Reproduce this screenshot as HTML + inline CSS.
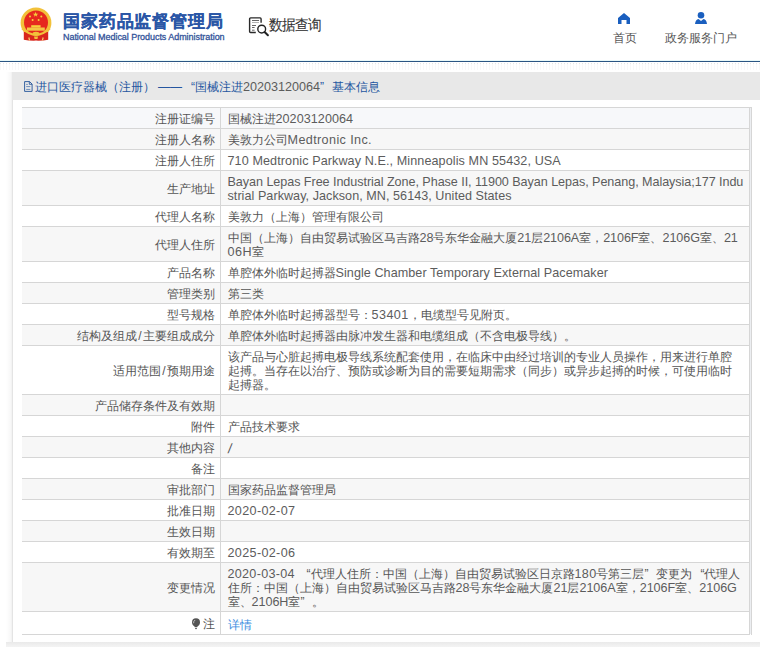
<!DOCTYPE html>
<html><head><meta charset="utf-8">
<style>
*{margin:0;padding:0;box-sizing:border-box}
html,body{width:760px;height:647px;overflow:hidden;background:#fff;font-family:"Liberation Sans",sans-serif;position:relative}
.a{position:absolute;white-space:nowrap}
.title{left:63px;top:9.5px;font-size:16.5px;font-weight:bold;color:#2a56a6;line-height:22px;-webkit-text-stroke:0.2px #2a56a6;letter-spacing:0.85px}
.sub{left:63px;top:32.4px;font-size:9px;color:#34549a;line-height:11px;letter-spacing:-0.05px;-webkit-text-stroke:0.3px #34549a}
.sq{left:269px;top:15px;font-size:14px;color:#333;line-height:18px;letter-spacing:-0.9px;transform:scaleY(1.1);transform-origin:0 0;-webkit-text-stroke:0.1px #333}
.nav{font-size:12px;color:#555;line-height:14px;top:31px}
.topline{left:0;top:61px;width:760px;height:1px;background:#2a5482}
.topline2{left:0;top:60px;width:760px;height:1px;background:#e8f8f9}
.dots{left:0;top:63px;width:760px;height:1px;background-image:linear-gradient(90deg,#d0d0d0 1px,transparent 1px);background-size:3px 1px;opacity:.55}
.dots2{left:0;top:64px;width:760px;height:6px;background-image:linear-gradient(90deg,#f4f4f4 1px,transparent 1px);background-size:3px 6px;opacity:.6}
.shadowL{left:6px;top:72px;width:7px;height:575px;background:linear-gradient(90deg,rgba(0,0,0,0),rgba(0,0,0,.03) 70%,rgba(0,0,0,.09))}
.shadowB{left:6px;top:642px;width:760px;height:5px;background:linear-gradient(180deg,#e9e9e9,#f0f0f0 60%,#f3f3f3)}
.panel{left:12px;top:72px;width:760px;height:570px;background:#fff;border-left:1px solid #e4e4e4}
.phead{left:12px;top:72px;width:760px;height:28px;background:#e8e8e8}
.ptxt{left:35px;top:80px;font-size:12px;color:#2456a0;line-height:14px}
.tbl{left:22px;top:107px;width:728px;border-top:1px solid #d6d6d6}
.gapc{left:750px;top:108px;width:1px;height:526px;background:#eceef1}
.outr{left:751px;top:107px;width:1px;height:528px;background:#d6d6d6}
.outt{left:749px;top:107px;width:3px;height:1px;background:#d6d6d6}
.r{display:flex;border-bottom:1px solid #d6d6d6;font-size:12px;line-height:14px;color:#555}
.r.g{background:#f7f7f7}
.r.h{background:#f7f8fa}
.l{width:199px;border-right:1px solid #d6d6d6;text-align:right;padding-right:5px;padding-top:2px;display:flex;align-items:center;justify-content:flex-end}
.v{width:529px;border-right:1px solid #d6d6d6;padding:4px 0 2px 6.5px;white-space:nowrap}
.e{width:2px;border-right:1px solid #d6d6d6;background:#f2f2f2}
.la{font-size:12.6px;color:#5c5c5c}
.q{display:inline-block;width:12px}
.qo{text-align:right}
.qc{text-align:left}
</style></head><body>
<!-- emblem -->
<svg class="a" style="left:17px;top:4px" width="38" height="40" viewBox="0 0 38 40">
  <path d="M6.8 24 L6.8 35.8 Q12 36.8 19 36.6 Q26 36.8 31.2 35.8 L31.2 24 Z" fill="#d9261d"/>
  <path d="M3.6 19 A15.4 15.4 0 0 1 34.4 19 Q34.4 24 31 28 L7 28 Q3.6 24 3.6 19 Z" fill="#f2c13a"/>
  <circle cx="19" cy="18.4" r="12" fill="#e6281e"/>
  <polygon points="18.6,7.8 19.3,9.7 21.3,9.7 19.7,10.9 20.3,12.8 18.6,11.6 16.9,12.8 17.5,10.9 15.9,9.7 17.9,9.7" fill="#f6cf3c"/>
  <circle cx="13" cy="12.6" r="1" fill="#f6cf3c"/><circle cx="24.3" cy="12.6" r="1" fill="#f6cf3c"/>
  <circle cx="15.6" cy="16" r="1" fill="#f6cf3c"/><circle cx="21.6" cy="16" r="1" fill="#f6cf3c"/>
  <rect x="14.2" y="21.2" width="9.4" height="2.4" fill="#f6cf3c"/>
  <rect x="10" y="23.5" width="17.8" height="3.2" fill="#f3c544"/>
  <path d="M5.2 24.5 Q19 37 32.8 24.5" fill="none" stroke="#f2c13a" stroke-width="2.3"/>
  <path d="M15.8 28.6 Q19 27 22.2 28.6 L21.6 31.4 H16.4 Z" fill="#f2c13a"/>
  <path d="M17 32.5 H21 L20.5 35 H17.5 Z" fill="#f2c13a"/>
  <path d="M11.8 33.5 L12.6 36.4 M26.2 33.5 L25.4 36.4" stroke="#f6d36a" stroke-width="1.2"/>
</svg>
<div class="a title">国家药品监督管理局</div>
<div class="a sub">National Medical Products Administration</div>
<!-- data query icon -->
<svg class="a" style="left:245px;top:12px" width="28" height="28" viewBox="0 0 28 28">
  <path d="M16.1 10.8 V6.9 Q16.1 5.9 15.1 5.9 H5.6 Q4.6 5.9 4.6 6.9 V19.5 Q4.6 20.5 5.6 20.5 H10.8" fill="none" stroke="#2a2a2a" stroke-width="1.4"/>
  <path d="M7 8.5 H14 M7 13.5 H11 M7 15.5 H9.6 M7 18.2 H9.6" stroke="#555" stroke-width="0.9"/>
  <path d="M7 10.5 H14" stroke="#aaa" stroke-width="0.9"/>
  <circle cx="16.7" cy="17.1" r="3.9" fill="#fff" stroke="#222" stroke-width="1.4"/>
  <path d="M19.6 20 L22.9 23.3" stroke="#222" stroke-width="2" stroke-linecap="round"/>
</svg>
<div class="a sq">数据查询</div>
<!-- nav -->
<svg class="a" style="left:617px;top:12px" width="14" height="13" viewBox="0 0 14 13">
  <path d="M7 1 L13 6 V12 H9.5 V8 H4.5 V12 H1 V6 Z" fill="#1a5fbf"/>
</svg>
<div class="a nav" style="left:613px">首页</div>
<svg class="a" style="left:694px;top:11px" width="14" height="14" viewBox="0 0 14 14">
  <circle cx="7" cy="4.2" r="3.3" fill="#1a5fbf"/>
  <path d="M1 13 Q1.5 8.5 4.5 8 L7 10 L9.5 8 Q12.5 8.5 13 13 Z" fill="#1a5fbf"/>
</svg>
<div class="a nav" style="left:665px">政务服务门户</div>

<div class="a topline2"></div>
<div class="a topline"></div>
<div class="a dots"></div><div class="a dots2"></div>

<div class="a shadowL"></div><div class="a shadowB"></div><div class="a panel"></div>
<div class="a phead"></div>
<svg class="a" style="left:21px;top:78px" width="16" height="16" viewBox="0 0 16 16">
  <path d="M3.6 3.6 H8.6 L11.1 6.1 V13.4 H3.6 Z" fill="none" stroke="#2b5a9c" stroke-width="0.95"/>
  <path d="M8.3 3.6 V6.3 H11.1" fill="none" stroke="#2b5a9c" stroke-width="0.9"/>
  <path d="M5.2 6.4 H6.8 M5.2 8.6 H9.3 M5.2 11.4 H9.3" stroke="#4a73ad" stroke-width="0.8"/>
</svg>
<div class="a ptxt">进口医疗器械（注册）<span style="display:inline-block;width:28px;padding-left:3px">——</span><span class="q qo">“</span>国械注进<span class="la">20203120064</span><span class="q qc">”</span>基本信息</div>

<div class="a gapc"></div><div class="a outr"></div><div class="a outt"></div>
<div class="a tbl">
<div class="r h" style="height:21px"><div class="l">注册证编号</div><div class="v">国械注进<span class="la" style="letter-spacing:0.054px">20203120064</span></div></div>
<div class="r g" style="height:21px"><div class="l">注册人名称</div><div class="v">美敦力公司<span class="la" style="letter-spacing:0.386px">Medtronic Inc.</span></div></div>
<div class="r " style="height:21px"><div class="l">注册人住所</div><div class="v"><span class="la" style="letter-spacing:0.095px">710 Medtronic Parkway N.E., Minneapolis MN 55432, USA</span></div></div>
<div class="r g" style="height:35px"><div class="l">生产地址</div><div class="v"><span class="la" style="letter-spacing:-0.055px">Bayan Lepas Free Industrial Zone, Phase II, 11900 Bayan Lepas, Penang, Malaysia;177 Indu</span><br><span class="la" style="letter-spacing:0.045px">strial Parkway, Jackson, MN, 56143, United States</span></div></div>
<div class="r " style="height:21px"><div class="l">代理人名称</div><div class="v">美敦力（上海）管理有限公司</div></div>
<div class="r g" style="height:35px"><div class="l">代理人住所</div><div class="v">中国（上海）自由贸易试验区马吉路<span class="la" style="letter-spacing:-0.085px">28</span>号东华金融大厦<span class="la" style="letter-spacing:-0.085px">21</span>层<span class="la" style="letter-spacing:-0.085px">2106A</span>室，<span class="la" style="letter-spacing:-0.085px">2106F</span>室、<span class="la" style="letter-spacing:-0.085px">2106G</span>室、<span class="la" style="letter-spacing:-0.085px">21</span><br><span class="la" style="letter-spacing:0.535px">06H</span>室</div></div>
<div class="r " style="height:21px"><div class="l">产品名称</div><div class="v">单腔体外临时起搏器<span class="la" style="letter-spacing:0.059px">Single Chamber Temporary External Pacemaker</span></div></div>
<div class="r g" style="height:21px"><div class="l">管理类别</div><div class="v">第三类</div></div>
<div class="r " style="height:21px"><div class="l">型号规格</div><div class="v">单腔体外临时起搏器型号：<span class="la" style="letter-spacing:0.44px">53401</span>，电缆型号见附页。</div></div>
<div class="r g" style="height:21px"><div class="l">结构及组成<span style="display:inline-block;width:6.3px;text-align:center">/</span>主要组成成分</div><div class="v">单腔体外临时起搏器由脉冲发生器和电缆组成（不含电极导线）。</div></div>
<div class="r " style="height:49px"><div class="l">适用范围<span style="display:inline-block;width:6.3px;text-align:center">/</span>预期用途</div><div class="v">该产品与心脏起搏电极导线系统配套使用，在临床中由经过培训的专业人员操作，用来进行单腔<br>起搏。当存在以治疗、预防或诊断为目的需要短期需求（同步）或异步起搏的时候，可使用临时<br>起搏器。</div></div>
<div class="r g" style="height:21px"><div class="l">产品储存条件及有效期</div><div class="v"></div></div>
<div class="r " style="height:21px"><div class="l">附件</div><div class="v">产品技术要求</div></div>
<div class="r g" style="height:21px"><div class="l">其他内容</div><div class="v"><span style="display:inline-block;font-size:13.5px;transform:translateY(1px) skewX(-8deg)">/</span></div></div>
<div class="r " style="height:21px"><div class="l">备注</div><div class="v"></div></div>
<div class="r g" style="height:21px"><div class="l">审批部门</div><div class="v">国家药品监督管理局</div></div>
<div class="r " style="height:21px"><div class="l">批准日期</div><div class="v"><span class="la" style="letter-spacing:0.34px">2020-02-07</span></div></div>
<div class="r g" style="height:21px"><div class="l">生效日期</div><div class="v"></div></div>
<div class="r " style="height:21px"><div class="l">有效期至</div><div class="v"><span class="la" style="letter-spacing:0.34px">2025-02-06</span></div></div>
<div class="r g" style="height:49px"><div class="l">变更情况</div><div class="v"><span class="la" style="letter-spacing:0.285px">2020-03-04 </span><span class="q qo">“</span>代理人住所：中国（上海）自由贸易试验区日京路<span class="la" style="letter-spacing:0.285px">180</span>号第三层<span class="q qc">”</span>变更为<span class="q qo">“</span>代理人<br>住所：中国（上海）自由贸易试验区马吉路<span class="la" style="letter-spacing:-0.033px">28</span>号东华金融大厦<span class="la" style="letter-spacing:-0.033px">21</span>层<span class="la" style="letter-spacing:-0.033px">2106A</span>室，<span class="la" style="letter-spacing:-0.033px">2106F</span>室、<span class="la" style="letter-spacing:-0.033px">2106G</span><br>室、<span class="la" style="letter-spacing:-0.04px">2106H</span>室<span class="q qc">”</span>。</div></div>
<div class="r " style="height:23px"><div class="l"><svg width="10" height="12" viewBox="0 0 10 12" style="margin-right:2px;margin-top:-1px"><circle cx="5" cy="4.3" r="4" fill="#545454"/><path d="M2 6.5 Q3.5 8 3.8 9.3 H6.2 Q6.5 8 8 6.5 Z" fill="#545454"/><path d="M2.6 5.2 Q2.4 3 4.2 2" fill="none" stroke="#ddd" stroke-width="0.8"/><path d="M4 10.6 H6" stroke="#545454" stroke-width="0.9"/></svg>注</div><div class="v" style="padding-top:6px"><span style="color:#3b8de0">详情</span></div></div>
</div>
</body></html>
